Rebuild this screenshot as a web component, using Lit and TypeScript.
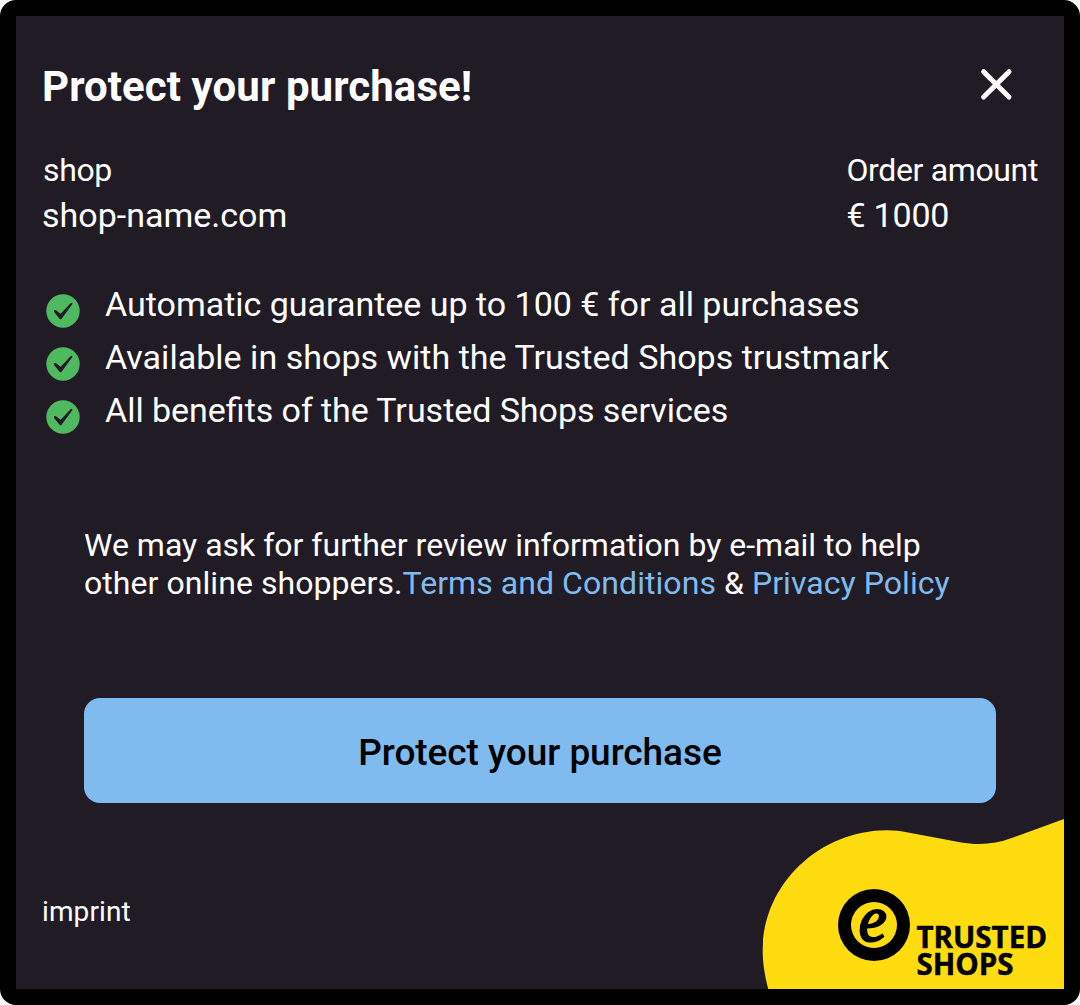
import { LitElement, html, css } from "lit";
import { customElement } from "lit/decorators.js";

const benefits = [
  { text: "Automatic guarantee up to 100 € for all purchases", cls: "guarantee" },
  { text: "Available in shops with the Trusted Shops trustmark", cls: "trustmark" },
  { text: "All benefits of the Trusted Shops services", cls: "services" },
];

@customElement("app-root")
export class AppRoot extends LitElement {
  static styles = css`
    :host { display: block; width: 1080px; height: 1005px; background: #f8f8f8; }
    * { box-sizing: border-box; }
    .frame { position: relative; display: flex; flex-direction: column; width: 1080px; height: 1005px; border: 16px solid #000; border-radius: 16px; background: #211b25; color: #fff; font-family: Roboto, "Liberation Sans", sans-serif; overflow: hidden; white-space: nowrap; }
    .head { display: flex; justify-content: space-between; padding: 46px 50px 0 26px; height: 133px; }
    h1 { margin: 0; font-size: 42px; line-height: 50px; font-weight: 700; letter-spacing: 0.08px; }
    .close { padding: 0; margin-top: 5px; border: 0; background: none; width: 36px; height: 36px; }
    .close svg { display: block; }
    .info { display: flex; justify-content: space-between; padding: 0 26px; height: 135px; }
    .label { font-size: 32px; line-height: 42px; letter-spacing: -0.36px; }
    .shop .label { padding-left: 1px; }
    .value { font-size: 34px; line-height: 48px; }
    .amount .value { letter-spacing: -0.2px; }
    ul { list-style: none; margin: 0; padding: 0 30px; height: 213px; display: flex; flex-direction: column; gap: 13px; }
    li { display: flex; gap: 25px; font-size: 34px; line-height: 40px; height: 40px; }
    li svg { margin-top: 10px; flex: none; }
    .guarantee { letter-spacing: -0.01px; }
    .trustmark { letter-spacing: 0.02px; }
    .services { word-spacing: -0.25px; }
    .terms { margin: 0; padding: 29px 68px 0; height: 201px; flex: none; font-size: 32px; line-height: 38px; }
    .second { letter-spacing: 0.06px; }
    a { color: #80bbef; text-decoration: none; }
    .cta { margin: 0 68px; height: 105px; flex: none; border: 0; border-radius: 16px; background: #80bbef; color: #000; font: 500 37px/105px Roboto, sans-serif; letter-spacing: -0.06px; padding: 2px 0 0; }
    .imprint { margin: 92px 0 0 26px; font-size: 28px; line-height: 34px; letter-spacing: 0.1px; color: #fff; align-self: flex-start; }
    .brand { position: absolute; right: 0; bottom: 0; }
    .brand .name { font-family: "Open Sans", "Noto Sans", sans-serif; font-weight: 700; stroke: #000; stroke-width: 0.5; }
    .brand .e { font-family: "Liberation Serif", serif; font-style: italic; stroke: #000; stroke-width: 2.2; }
  `;

  render() {
    return html`<main class="frame">
      <header class="head">
        <h1>Protect your purchase!</h1>
        <button class="close" aria-label="Close">
          <svg width="36" height="36" viewBox="0 0 36 36"><path d="M5.6 4.7L31 30.1M31 4.7L5.6 30.1" stroke="#fff" stroke-width="5" stroke-linecap="round" /></svg>
        </button>
      </header>
      <section class="info">
        <div class="shop"><div class="label">shop</div><div class="value">shop-name.com</div></div>
        <div class="amount"><div class="label">Order amount</div><div class="value">€ 1000</div></div>
      </section>
      <ul>
        ${benefits.map((b) => html`<li>
          <svg width="34" height="34" viewBox="0 0 34 34"><circle cx="17" cy="17" r="16.7" fill="#4fb960" /><path d="M8 16.2Q9.6 15.5 11 16.9L14.6 19.8L24.6 9.2Q26.6 8.2 26.4 10L15.6 24.8Q14.5 25.9 13.5 24.7L8 18Z" fill="#211b25" /></svg>
          <span class=${b.cls}>${b.text}</span>
        </li>`)}
      </ul>
      <p class="terms">We may ask for further review information by e-mail to help<br /><span class="second">other online shoppers.<a href="#">Terms and Conditions</a> &amp; <a href="#">Privacy Policy</a></span></p>
      <button class="cta">Protect your purchase</button>
      <a class="imprint" href="#">imprint</a>
      <svg class="brand" width="304" height="174" viewBox="760 815 304 174">
        <path d="M768.2 989C764 972 762.7 962 762.7 950C762.7 884 820 830.3 887 830.3C894 830.3 901 831 908 832.4L960 842.2C978 845.6 996 844 1011 838.3L1064 819V989Z" fill="#ffdc0f" />
        <circle cx="874" cy="925" r="36" />
        <circle cx="874" cy="925" r="23" fill="#ffdc0f" />
        <text class="e" x="858.7" y="940.6" font-size="66" textLength="28" lengthAdjust="spacingAndGlyphs">e</text>
        <text class="name" x="916.5" y="947.7" font-size="30.5" textLength="130.5" lengthAdjust="spacingAndGlyphs">TRUSTED</text>
        <text class="name" x="916.5" y="974.6" font-size="30.5" textLength="97" lengthAdjust="spacingAndGlyphs">SHOPS</text>
      </svg>
    </main>`;
  }
}
